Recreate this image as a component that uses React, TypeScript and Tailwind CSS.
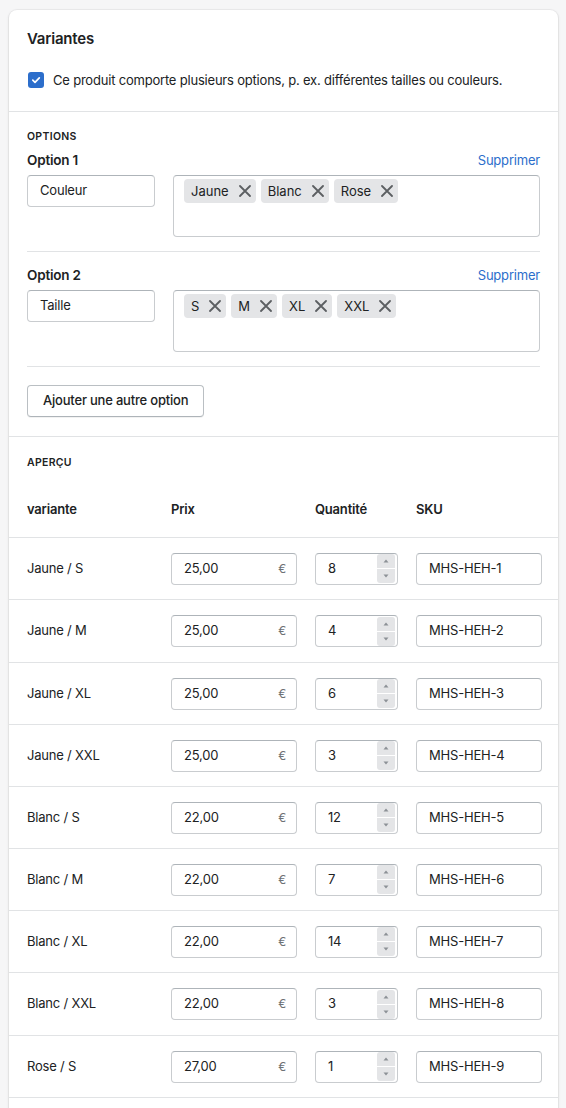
import React from "react";

const rows: { name: string; price: string; qty: string; sku: string; tall?: boolean }[] = [
  { name: "Jaune / S", price: "25,00", qty: "8", sku: "MHS-HEH-1" },
  { name: "Jaune / M", price: "25,00", qty: "4", sku: "MHS-HEH-2", tall: true },
  { name: "Jaune / XL", price: "25,00", qty: "6", sku: "MHS-HEH-3" },
  { name: "Jaune / XXL", price: "25,00", qty: "3", sku: "MHS-HEH-4" },
  { name: "Blanc / S", price: "22,00", qty: "12", sku: "MHS-HEH-5" },
  { name: "Blanc / M", price: "22,00", qty: "7", sku: "MHS-HEH-6" },
  { name: "Blanc / XL", price: "22,00", qty: "14", sku: "MHS-HEH-7" },
  { name: "Blanc / XXL", price: "22,00", qty: "3", sku: "MHS-HEH-8", tall: true },
  { name: "Rose / S", price: "27,00", qty: "1", sku: "MHS-HEH-9" },
];

function XIcon() {
  return (
    <svg width="12" height="12" viewBox="0 0 12 12" fill="none">
      <path d="M1 1L11 11M11 1L1 11" stroke="#5c5f62" strokeWidth="1.8" strokeLinecap="round" />
    </svg>
  );
}

function Tag({ label }: { label: string }) {
  return (
    <div className="flex h-[24px] items-center rounded-[4px] bg-[#e4e5e7] pl-[7px] pr-[1px] text-[13px] leading-[20px] tracking-normal text-[#202223]">
      <span>{label}</span>
      <span className="ml-[6px] flex h-[20px] w-[20px] items-center justify-center">
        <XIcon />
      </span>
    </div>
  );
}

function OptionBlock({ title, name, values, first }: { title: string; name: string; values: string[]; first?: boolean }) {
  return (
    <div className={`border-b border-[#e1e3e5] pb-[14px] ${first ? "" : "pt-[13px]"}`}>
      <div className="flex h-[20px] items-center justify-between">
        <span className="text-[13.5px] font-semibold leading-[20px]">{title}</span>
        <span className="text-[13px] leading-[20px] text-[#2c6ecb]">Supprimer</span>
      </div>
      <div className="mt-[5px] flex gap-[18px]">
        <div className="flex h-[32px] w-[128px] items-center rounded-[4px] border border-[#c9cccf] border-t-[#aeb4b9] pl-[12px] text-[13px]">
          {name}
        </div>
        <div className="flex h-[62px] flex-1 flex-wrap content-start gap-[5px] rounded-[4px] border border-[#c9cccf] border-t-[#aeb4b9] pl-[10px] pt-[3px]">
          {values.map((v) => (
            <Tag key={v} label={v} />
          ))}
        </div>
      </div>
    </div>
  );
}

function Stepper() {
  return (
    <div className="flex w-[18px] flex-col gap-[1px]">
      <div className="flex h-[14px] items-center justify-center rounded-t-[3px] bg-[#e4e5e7]">
        <svg width="6" height="4" viewBox="0 0 6 4">
          <path d="M3 0.5L5.5 3.5H0.5Z" fill="#8c9196" />
        </svg>
      </div>
      <div className="flex h-[14px] items-center justify-center rounded-b-[3px] bg-[#e4e5e7]">
        <svg width="6" height="4" viewBox="0 0 6 4">
          <path d="M3 3.5L0.5 0.5H5.5Z" fill="#8c9196" />
        </svg>
      </div>
    </div>
  );
}

export default function App() {
  return (
    <div className="min-h-screen bg-[#f6f6f7] pl-[9px] pt-[10px] font-[Inter,'Noto_Sans',sans-serif] tracking-[-0.2px] text-[#202223]">
      <div className="w-[549px] overflow-hidden rounded-t-[8px] bg-white pb-[24px] shadow-[0_0_0_1px_rgba(63,63,68,0.05),0_1px_3px_0_rgba(63,63,68,0.15)]">
        {/* Section 1 */}
        <div className="border-b border-[#e1e3e5] px-[18px] pb-[21px] pt-[19px]">
          <h2 className="text-[15px] font-semibold leading-[20px]">Variantes</h2>
          <label className="mt-[21px] flex h-[20px] items-center gap-[9px]">
            <span className="ml-[1px] flex h-[16px] w-[16px] items-center justify-center rounded-[3px] bg-[#2c6ecb]">
              <svg width="10" height="10" viewBox="0 0 10 10" fill="none">
                <path d="M1.8 5.2L4 7.3L8.3 2.8" stroke="white" strokeWidth="1.7" strokeLinecap="round" strokeLinejoin="round" />
              </svg>
            </span>
            <span className="text-[13px] leading-[20px]">
              Ce produit comporte plusieurs options, p. ex. différentes tailles ou couleurs.
            </span>
          </label>
        </div>

        {/* Section 2 */}
        <div className="border-b border-[#e1e3e5] px-[18px] pb-[19px] pt-[17px]">
          <div className="text-[10.5px] font-semibold uppercase leading-[16px] tracking-[0.3px]">Options</div>
          <div className="mt-[5px]">
            <OptionBlock first title="Option 1" name="Couleur" values={["Jaune", "Blanc", "Rose"]} />
            <OptionBlock title="Option 2" name="Taille" values={["S", "M", "XL", "XXL"]} />
          </div>
          <button className="mt-[18px] flex h-[32px] items-center rounded-[4px] border border-[#babfc3] border-b-[#aeb4b9] px-[15px] text-[13px] font-medium shadow-[0_1px_0_rgba(0,0,0,0.05)]">
            Ajouter une autre option
          </button>
        </div>

        {/* Section 3 */}
        <div>
          <div className="px-[18px] pt-[18px] text-[10.5px] font-semibold uppercase leading-[16px] tracking-[0.3px]">
            Aperçu
          </div>
          <div className="mt-[28px] grid grid-cols-[126px_126px_83px_126px] gap-x-[18px] border-b border-[#e1e3e5] px-[18px] pb-[18px] text-[13px] font-semibold leading-[20px]">
            <span>variante</span>
            <span>Prix</span>
            <span>Quantité</span>
            <span>SKU</span>
          </div>
          {rows.map((r) => (
            <div
              key={r.sku}
              className={`grid grid-cols-[126px_126px_83px_126px] items-center gap-x-[18px] border-b border-[#e1e3e5] px-[18px] text-[13px] ${r.tall ? "h-[63px]" : "h-[62px]"}`}
            >
              <span>{r.name}</span>
              <div className="flex h-[32px] items-center justify-between rounded-[4px] border border-[#c9cccf] border-t-[#aeb4b9] pl-[12px] pr-[10px]">
                <span>{r.price}</span>
                <span className="text-[12px] text-[#6d7175]">€</span>
              </div>
              <div className="flex h-[32px] items-center justify-between rounded-[4px] border border-[#c9cccf] border-t-[#aeb4b9] pl-[12px] pr-[2px]">
                <span>{r.qty}</span>
                <Stepper />
              </div>
              <div className="flex h-[32px] items-center rounded-[4px] border border-[#c9cccf] border-t-[#aeb4b9] pl-[12px]">
                {r.sku}
              </div>
            </div>
          ))}
        </div>
      </div>
    </div>
  );
}
